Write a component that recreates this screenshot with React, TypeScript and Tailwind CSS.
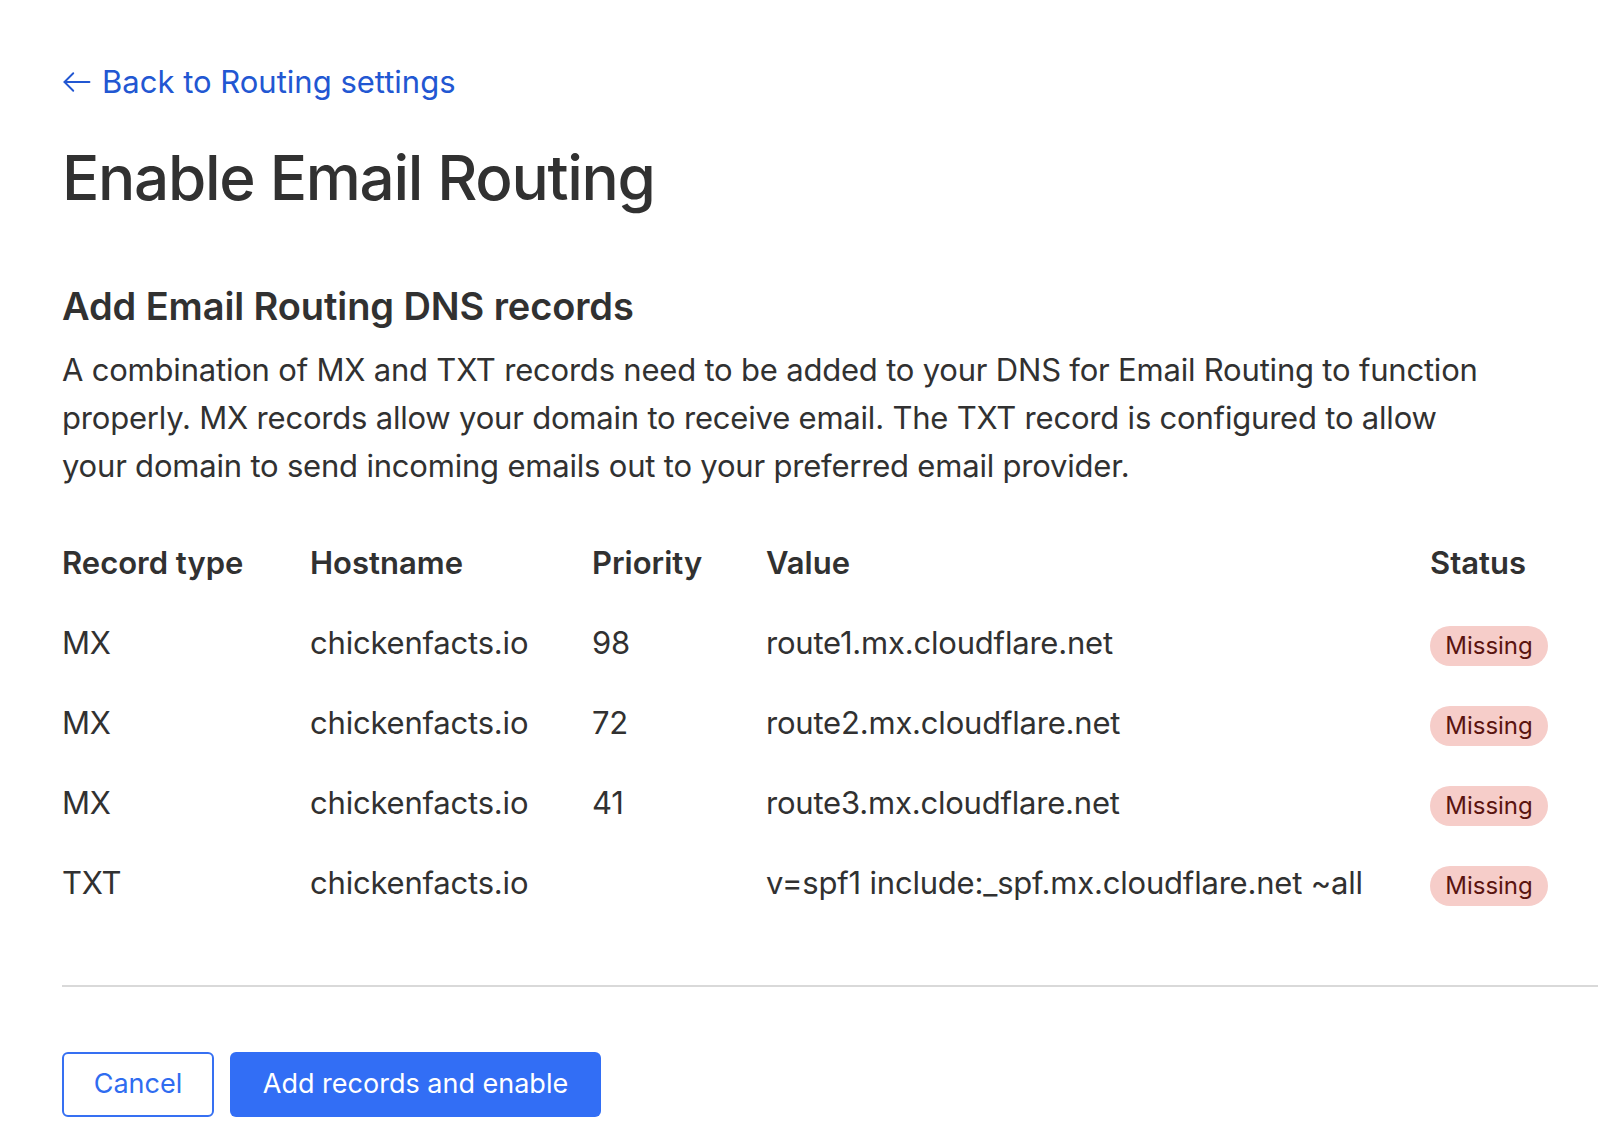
import React from "react";

const rows = [
  { type: "MX", host: "chickenfacts.io", priority: "98", value: "route1.mx.cloudflare.net" },
  { type: "MX", host: "chickenfacts.io", priority: "72", value: "route2.mx.cloudflare.net" },
  { type: "MX", host: "chickenfacts.io", priority: "41", value: "route3.mx.cloudflare.net" },
  { type: "TXT", host: "chickenfacts.io", priority: "", value: "v=spf1 include:_spf.mx.cloudflare.net ~all" },
];

export default function App() {
  return (
    <div
      className="min-h-screen bg-white pl-[62px] text-[#313131]"
      style={{ fontFamily: "Inter, 'Noto Sans', sans-serif" }}
    >
      <div className="pt-[62px]">
        <a href="#" className="flex items-center gap-[10px] text-[31px] leading-[40px] text-[#2257d2]">
          <svg width="30" height="30" viewBox="0 0 24 24" fill="none" stroke="currentColor" strokeWidth="1.5" strokeLinecap="round" strokeLinejoin="round">
            <path d="M22 12H2" />
            <path d="M9 5l-7 7 7 7" />
          </svg>
          <span>Back to Routing settings</span>
        </a>
      </div>
      <h1 className="mt-[40px] text-[62px] leading-[72px] font-medium tracking-[-1.3px]">Enable Email Routing</h1>
      <h2 className="mt-[70px] text-[38px] leading-[44px] font-semibold tracking-[-0.1px]">Add Email Routing DNS records</h2>
      <p className="mt-[18px] max-w-[1425px] text-[31px] leading-[48px] tracking-[-0.2px]">
        A combination of MX and TXT records need to be added to your DNS for Email Routing to function properly. MX records allow your domain to receive email. The TXT record is configured to allow your domain to send incoming emails out to your preferred email provider.
      </p>
      <div className="mt-[50px] text-[31px] tracking-[-0.2px]">
        <div className="grid grid-cols-[248px_282px_174px_664px_1fr] h-[44px] items-center font-semibold tracking-normal">
          <div>Record type</div>
          <div>Hostname</div>
          <div>Priority</div>
          <div>Value</div>
          <div>Status</div>
        </div>
        <div className="mt-[19px]">
          {rows.map((r, i) => (
            <div key={i} className="grid grid-cols-[248px_282px_174px_664px_1fr] h-[80px] items-center">
              <div>{r.type}</div>
              <div>{r.host}</div>
              <div>{r.priority}</div>
              <div>{r.value}</div>
              <div>
                <span className="inline-flex h-[40px] w-[118px] items-center justify-center rounded-full bg-[#f6cdc9] text-[24px] tracking-normal text-[#5a1410]">
                  Missing
                </span>
              </div>
            </div>
          ))}
        </div>
      </div>
      <div className="mt-[62px] h-[2px] bg-[#d9d9d9]" />
      <div className="mt-[65px] flex gap-[16px]">
        <button className="h-[65px] w-[152px] rounded-[6px] border-2 border-[#3670f2] bg-white text-[27px] text-[#2f6cf0]">
          Cancel
        </button>
        <button className="h-[65px] w-[371px] rounded-[6px] bg-[#326ef5] text-[27px] text-white">
          Add records and enable
        </button>
      </div>
    </div>
  );
}
